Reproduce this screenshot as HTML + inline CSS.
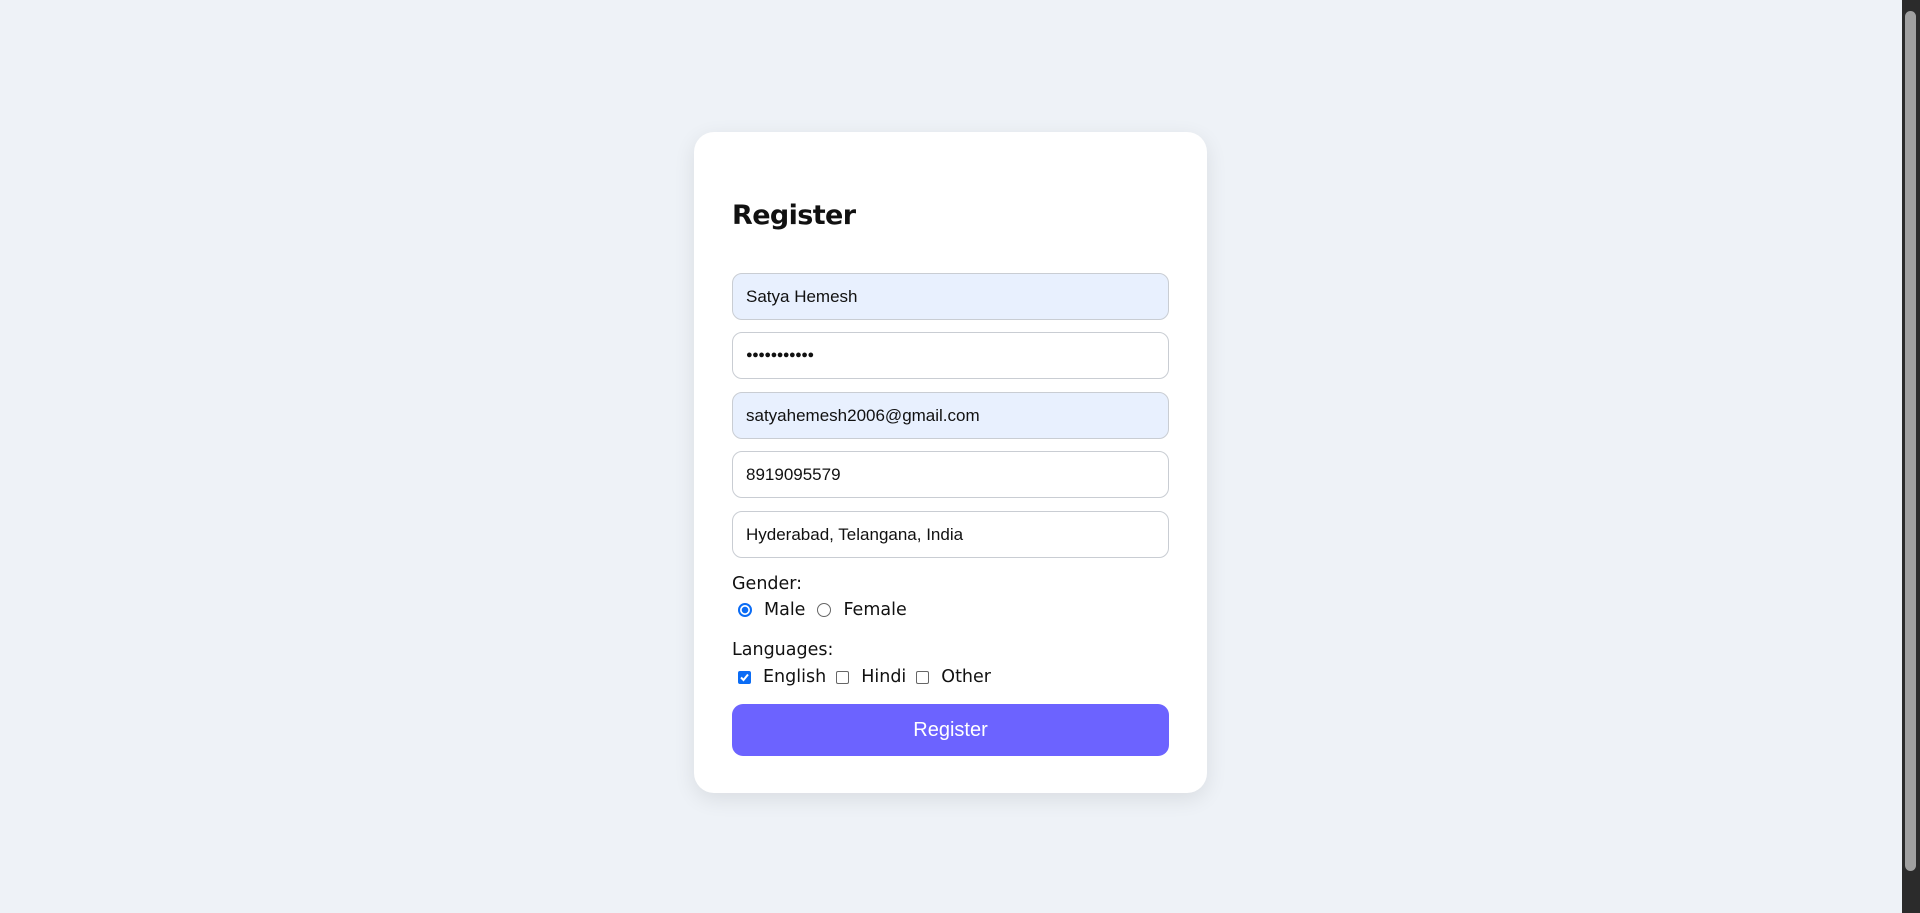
<!DOCTYPE html>
<html><head><style>
html,body{margin:0;padding:0;width:1920px;height:913px;overflow:hidden;background:#eef2f7;font-family:"Liberation Sans",sans-serif;}
.card{position:absolute;left:694px;top:132px;width:513px;height:661px;background:#fff;border-radius:20px;box-shadow:0 6px 22px rgba(0,0,0,0.09);}
h1{position:absolute;left:38px;top:68px;margin:0;font-size:27px;font-weight:bold;font-family:"DejaVu Sans","Liberation Sans",sans-serif;letter-spacing:-0.6px;color:#111;}
.in{position:absolute;left:38px;width:437px;height:47px;border:1px solid #c9cdd3;border-radius:10px;font-size:17px;line-height:45px;padding-left:13px;box-sizing:border-box;color:#111;}
.af{background:#e8f0fe;}
.lbl{position:absolute;left:38px;color:#111;font-family:"DejaVu Sans","Liberation Sans",sans-serif;font-size:17.5px;}
.row{position:absolute;left:44px;font-size:17.5px;font-family:"DejaVu Sans","Liberation Sans",sans-serif;color:#111;display:flex;align-items:center;}
.radio{width:14px;height:14px;border:1px solid #666;border-radius:50%;display:inline-block;margin-right:12px;box-sizing:border-box;}
.radio.on{border:2px solid #0b6cf5;background:radial-gradient(circle,#0b6cf5 0 3px,#fff 3.5px);}
.cb{width:13px;height:13px;border:1px solid #666;border-radius:2px;display:inline-block;margin-right:12px;box-sizing:border-box;}
.cb.on{background:#0b6cf5;border-color:#0b6cf5;position:relative;}
.btn{position:absolute;left:38px;top:572px;width:437px;height:52px;background:#6c63ff;border-radius:11px;color:#fff;font-size:20px;text-align:center;line-height:52px;}
.sb{position:absolute;right:0;top:0;width:18px;height:913px;background:#2b2b2b;}
.th{position:absolute;left:3px;top:11px;width:11px;height:860px;background:#a0a0a0;border-radius:6px;}
</style></head><body>
<div class="card">
<h1>Register</h1>
<div class="in af" style="top:141px">Satya Hemesh</div>
<div class="in" style="top:200px;font-size:11px;letter-spacing:-0.5px">●●●●●●●●●●●</div>
<div class="in af" style="top:260px">satyahemesh2006@gmail.com</div>
<div class="in" style="top:319px">8919095579</div>
<div class="in" style="top:379px">Hyderabad, Telangana, India</div>
<div class="lbl" style="top:442px">Gender:</div>
<div class="row" style="top:468px"><span class="radio on"></span>Male<span class="radio" style="margin-left:12px"></span>Female</div>
<div class="lbl" style="top:508px">Languages:</div>
<div class="row" style="top:535px"><span class="cb on"><svg width="13" height="13" style="position:absolute;left:-1px;top:-1px"><path d="M3 6.5 L5.5 9 L10 3.5" stroke="#fff" stroke-width="2" fill="none"/></svg></span>English<span class="cb" style="margin-left:10px"></span>Hindi<span class="cb" style="margin-left:10px"></span>Other</div>
<div class="btn">Register</div>
</div>
<div class="sb"><div class="th"></div></div>
</body></html>
